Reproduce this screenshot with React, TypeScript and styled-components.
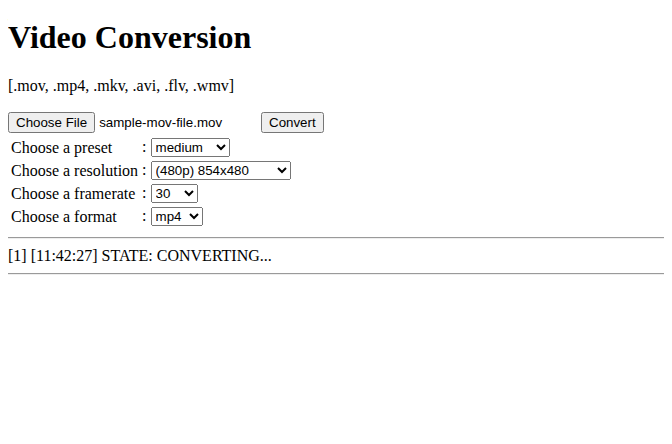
import React from 'react';
import styled, { createGlobalStyle } from 'styled-components';

const GlobalStyle = createGlobalStyle`
    body {
        margin: 8px;
        font-family: "Liberation Serif", "Times New Roman", serif;
        font-size: 16px;
        color: #000;
        background: #fff;
    }
`;

const Title = styled.h1`
    font-size: 2em;
    font-weight: bold;
    margin: 11px 0 21px;
`;

const Formats = styled.p`
    margin: 16px 0 17px;
`;

const UploadRow = styled.div`
    display: flex;
    align-items: center;
    margin-bottom: 2px;
`;

const FilePicker = styled.div`
    display: flex;
    align-items: center;
    width: 253px;
    font-family: "Liberation Sans", Arial, sans-serif;
    font-size: 13.333px;
`;

const FileName = styled.span`
    margin-left: 4px;
    white-space: nowrap;
`;

const NativeButton = styled.button`
    font-family: "Liberation Sans", Arial, sans-serif;
    font-size: 13.333px;
`;

const OptionsTable = styled.table`
    border-spacing: 2px;
`;

const LabelCell = styled.td`
    padding: 1px;
    white-space: nowrap;
`;

const ValueCell = styled.td`
    padding: 1px;
    white-space: nowrap;
`;

const Picker = styled.select<{ $width: number }>`
    width: ${({ $width }) => $width}px;
    font-family: "Liberation Sans", Arial, sans-serif;
    font-size: 13.333px;
`;

const Rule = styled.hr`
    margin: 8px 0;
    border: none;
    border-top: 1px solid #9a9a9a;
    border-bottom: 1px solid #eeeeee;
`;

const LogLine = styled.div``;

const options: { label: string; width: number; values: string[] }[] = [
    { label: 'Choose a preset', width: 79, values: ['medium', 'ultrafast', 'superfast', 'veryfast', 'faster', 'fast', 'slow', 'slower', 'veryslow'] },
    { label: 'Choose a resolution', width: 140, values: ['(480p) 854x480', '(360p) 640x360', '(720p) 1280x720', '(1080p) 1920x1080'] },
    { label: 'Choose a framerate', width: 47, values: ['30', '24', '25', '60'] },
    { label: 'Choose a format', width: 52, values: ['mp4', 'mkv', 'avi', 'flv', 'wmv', 'mov'] },
];

export default function App() {
    return (
        <>
            <GlobalStyle />
            <Title>Video Conversion</Title>
            <Formats>[.mov, .mp4, .mkv, .avi, .flv, .wmv]</Formats>
            <UploadRow>
                <FilePicker>
                    <NativeButton type="button">Choose File</NativeButton>
                    <FileName>sample-mov-file.mov</FileName>
                </FilePicker>
                <NativeButton type="button">Convert</NativeButton>
            </UploadRow>
            <OptionsTable>
                <tbody>
                    {options.map(o => (
                        <tr key={o.label}>
                            <LabelCell>{o.label}</LabelCell>
                            <ValueCell>
                                : <Picker $width={o.width} defaultValue={o.values[0]}>
                                    {o.values.map(v => <option key={v}>{v}</option>)}
                                </Picker>
                            </ValueCell>
                        </tr>
                    ))}
                </tbody>
            </OptionsTable>
            <Rule />
            <LogLine>[1] [11:42:27] STATE: CONVERTING...</LogLine>
            <Rule />
        </>
    );
}
